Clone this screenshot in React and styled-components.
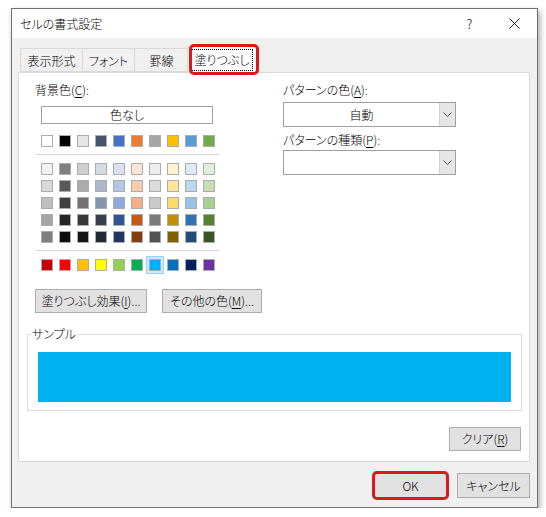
import React from 'react';
import styled, { createGlobalStyle } from 'styled-components';

const THEME = ['#FFFFFF', '#000000', '#E7E6E6', '#44546A', '#4472C4', '#ED7D31', '#A5A5A5', '#FFC000', '#5B9BD5', '#70AD47'];

const TINTS = [
	['#F2F2F2', '#7F7F7F', '#D0CECE', '#D6DCE4', '#D9E1F2', '#FCE4D6', '#EDEDED', '#FFF2CC', '#DDEBF7', '#E2EFDA'],
	['#D9D9D9', '#595959', '#AEAAAA', '#ACB9CA', '#B4C6E7', '#F8CBAD', '#DBDBDB', '#FFE699', '#BDD7EE', '#C6E0B4'],
	['#BFBFBF', '#404040', '#757171', '#8497B0', '#8EA9DB', '#F4B084', '#C9C9C9', '#FFD966', '#9BC2E6', '#A9D08E'],
	['#A6A6A6', '#262626', '#3A3838', '#333F4F', '#305496', '#C65911', '#7B7B7B', '#BF8F00', '#2F75B5', '#548235'],
	['#808080', '#0D0D0D', '#161616', '#222B35', '#203764', '#833C0C', '#525252', '#806000', '#1F4E78', '#375623'],
];

const STANDARD = ['#C00000', '#FF0000', '#FFC000', '#FFFF00', '#92D050', '#00B050', '#00B0F0', '#0070C0', '#002060', '#7030A0'];

const TABS = ['表示形式', 'フォント', '罫線', '塗りつぶし'];
const TAB_WIDTHS = [63, 52, 54, 70];

const Chevron = () => (
	<svg width="9" height="5" viewBox="0 0 9 5">
		<path d="M0.5 0.5 L4.5 4.5 L8.5 0.5" fill="none" stroke="#606060" strokeWidth="1" />
	</svg>
);

const Dropdown = ({ value }) => (
	<S_COMBO>
		<S_COMBO_VALUE>{value}</S_COMBO_VALUE>
		<S_COMBO_ARROW>
			<Chevron />
		</S_COMBO_ARROW>
	</S_COMBO>
);

const App = () => {
	return (
		<>
			<GlobalStyle />
			<S_DIALOG>
				<S_TITLEBAR>
					<S_TITLE>セルの書式設定</S_TITLE>
					<S_CAPTION_BTN>?</S_CAPTION_BTN>
					<S_CAPTION_BTN>
						<svg width="11" height="11" viewBox="0 0 11 11">
							<path d="M0.5 0.5 L10.5 10.5 M10.5 0.5 L0.5 10.5" stroke="#222" strokeWidth="1" />
						</svg>
					</S_CAPTION_BTN>
				</S_TITLEBAR>

				<S_BODY>
					<S_TABS>
						{TABS.map((t, i) => (
							<S_TAB key={t} $w={TAB_WIDTHS[i]} $active={i === 3}>
								{i === 3 ? <S_FOCUS>{t}</S_FOCUS> : t}
							</S_TAB>
						))}
					</S_TABS>

					<S_PANEL>
						<S_TOP>
							<S_LEFT>
								<S_LABEL>
									背景色(<u>C</u>):
								</S_LABEL>
								<S_NOCOLOR>色なし</S_NOCOLOR>
								<S_ROW $mt={11}>
									{THEME.map((c) => (
										<S_SWATCH key={c} $c={c} />
									))}
								</S_ROW>
								<S_SEP $mt={7} />
								<S_GRID>
									{TINTS.flat().map((c, i) => (
										<S_SWATCH key={i} $c={c} />
									))}
								</S_GRID>
								<S_SEP $mt={7} />
								<S_ROW $mt={8}>
									{STANDARD.map((c, i) => (
										<S_SWATCH key={i} $c={c} $selected={i === 6} />
									))}
								</S_ROW>
							</S_LEFT>

							<S_RIGHT>
								<S_LABEL>
									パターンの色(<u>A</u>):
								</S_LABEL>
								<S_FIELD $mt={4}>
									<Dropdown value="自動" />
								</S_FIELD>
								<S_LABEL $mt={5}>
									パターンの種類(<u>P</u>):
								</S_LABEL>
								<S_FIELD $mt={2}>
									<Dropdown value="" />
								</S_FIELD>
							</S_RIGHT>
						</S_TOP>

						<S_ACTIONS>
							<S_BUTTON $w={112}>
								塗りつぶし効果(<u>I</u>)...
							</S_BUTTON>
							<S_BUTTON $w={100}>
								その他の色(<u>M</u>)...
							</S_BUTTON>
						</S_ACTIONS>

						<S_GROUP>
							<S_LEGEND>サンプル</S_LEGEND>
							<S_SAMPLE />
						</S_GROUP>

						<S_CLEAR_ROW>
							<S_BUTTON $w={72}>
								クリア(<u>R</u>)
							</S_BUTTON>
						</S_CLEAR_ROW>
					</S_PANEL>

					<S_FOOTER>
						<S_BUTTON $w={73} $h={25} $default>
							OK
						</S_BUTTON>
						<S_BUTTON $w={73} $h={25}>
							キャンセル
						</S_BUTTON>
					</S_FOOTER>
				</S_BODY>
			</S_DIALOG>
		</>
	);
};

const GlobalStyle = createGlobalStyle`
	* {
		box-sizing: border-box;
	}
	body {
		margin: 0;
		background: #fff;
		font-family: "Noto Sans CJK JP", "Noto Sans", sans-serif;
		font-feature-settings: "palt";
		font-weight: 300;
		font-size: 12px;
		color: #000;
	}
	u {
		text-decoration-thickness: 1px;
		text-underline-offset: 2px;
	}
`;

const S_DIALOG = styled.div`
	margin: 8px 0 0 11px;
	width: 527px;
	height: 500px;
	border: 1px solid #6f6f6f;
	background: #f0f0f0;
	box-shadow: 2px 3px 6px rgba(0, 0, 0, 0.35);
	display: flex;
	flex-direction: column;
`;

const S_TITLEBAR = styled.div`
	height: 29px;
	background: #fff;
	display: flex;
	align-items: center;
	padding-left: 8px;
`;

const S_TITLE = styled.div`
	flex: 1;
	font-size: 12px;
	line-height: 16px;
`;

const S_CAPTION_BTN = styled.div`
	width: 45px;
	height: 29px;
	display: flex;
	align-items: center;
	justify-content: center;
	font-size: 13px;
	color: #222;
`;

const S_BODY = styled.div`
	flex: 1;
	display: flex;
	flex-direction: column;
	padding: 10px 7px 0 6px;
`;

const S_TABS = styled.div`
	display: flex;
	height: 24px;
	padding-left: 2px;
	position: relative;
	z-index: 1;
`;

const S_TAB = styled.div`
	position: relative;
	width: ${(p) => p.$w}px;
	height: ${(p) => (p.$active ? 26 : 24)}px;
	margin: ${(p) => (p.$active ? '-2px -2px 0 -2px' : '0')};
	display: flex;
	align-items: center;
	justify-content: center;
	background: ${(p) => (p.$active ? '#fff' : '#f0f0f0')};
	border: 1px solid #d9d9d9;
	border-bottom: ${(p) => (p.$active ? 'none' : '1px solid #d9d9d9')};
	border-left: ${(p) => (p.$active ? '1px solid #d9d9d9' : 'none')};
	&:first-child {
		border-left: 1px solid #d9d9d9;
	}
	${(p) =>
		p.$active &&
		`
		&::after {
			content: '';
			position: absolute;
			top: -3px;
			left: 1px;
			right: -3px;
			bottom: -3px;
			border: 3px solid #e0161f;
			border-radius: 5px;
		}
	`}
`;

const S_FOCUS = styled.span`
	border: 1px dotted #000;
	padding: 2px 3px;
	line-height: 16px;
`;

const S_PANEL = styled.div`
	height: 390px;
	background: #fff;
	border: 1px solid #d9d9d9;
	padding: 9px 7px 0 8px;
	display: flex;
	flex-direction: column;
`;

const S_TOP = styled.div`
	display: flex;
	gap: 64px;
	padding-left: 8px;
`;

const S_LEFT = styled.div`
	width: 184px;
	display: flex;
	flex-direction: column;
`;

const S_RIGHT = styled.div`
	width: 173px;
	display: flex;
	flex-direction: column;
`;

const S_LABEL = styled.div`
	line-height: 16px;
	height: 16px;
	margin-top: ${(p) => p.$mt || 0}px;
	white-space: nowrap;
`;

const S_NOCOLOR = styled.div`
	margin: 8px 0 0 6px;
	width: 172px;
	height: 18px;
	border: 1px solid #a0a0a0;
	display: flex;
	align-items: center;
	justify-content: center;
	line-height: 16px;
`;

const S_ROW = styled.div`
	display: grid;
	grid-template-columns: repeat(10, 12px);
	column-gap: 6px;
	margin-top: ${(p) => p.$mt}px;
	padding-left: 6px;
`;

const S_GRID = styled(S_ROW)`
	row-gap: 5px;
	margin-top: 8px;
`;

const S_SWATCH = styled.div`
	width: 12px;
	height: 12px;
	background: ${(p) => p.$c};
	border: 1px solid #acacac;
	box-shadow: ${(p) => (p.$selected ? '0 0 0 2px #cce8ff, 0 0 0 3px #99d1ff' : 'none')};
`;

const S_SEP = styled.div`
	height: 1px;
	background: #d5d5d5;
	margin-top: ${(p) => p.$mt}px;
`;

const S_FIELD = styled.div`
	margin-top: ${(p) => p.$mt}px;
`;

const S_COMBO = styled.div`
	height: 25px;
	border: 1px solid #a0a0a0;
	display: flex;
	background: #fff;
`;

const S_COMBO_VALUE = styled.div`
	flex: 1;
	display: flex;
	align-items: center;
	justify-content: center;
	line-height: 16px;
`;

const S_COMBO_ARROW = styled.div`
	width: 16px;
	background: #e6e6e6;
	border-left: 1px solid #d0d0d0;
	display: flex;
	align-items: center;
	justify-content: center;
`;

const S_ACTIONS = styled.div`
	display: flex;
	gap: 15px;
	margin-top: 18px;
	padding-left: 8px;
`;

const S_BUTTON = styled.div`
	position: relative;
	width: ${(p) => p.$w}px;
	height: ${(p) => p.$h || 24}px;
	background: #e1e1e1;
	border: 1px solid ${(p) => (p.$default ? '#0078d7' : '#adadad')};
	display: flex;
	align-items: center;
	justify-content: center;
	line-height: 16px;
	white-space: nowrap;
	${(p) =>
		p.$default &&
		`
		&::after {
			content: '';
			position: absolute;
			top: -3px;
			left: -3px;
			right: -3px;
			bottom: -3px;
			border: 3px solid #e0161f;
			border-radius: 5px;
		}
	`}
`;

const S_GROUP = styled.fieldset`
	margin: 13px 0 0 0;
	min-width: 0;
	border: 1px solid #dcdcdc;
	padding: 10px 10px 8px 10px;
`;

const S_LEGEND = styled.legend`
	margin-left: -7px;
	padding: 0 1px;
	line-height: 16px;
`;

const S_SAMPLE = styled.div`
	height: 50px;
	background: #00b0f0;
`;

const S_CLEAR_ROW = styled.div`
	display: flex;
	justify-content: flex-end;
	margin-top: 16px;
	padding-right: 1px;
`;

const S_FOOTER = styled.div`
	display: flex;
	justify-content: flex-end;
	gap: 10px;
	padding-top: 11px;
`;

export default App;
